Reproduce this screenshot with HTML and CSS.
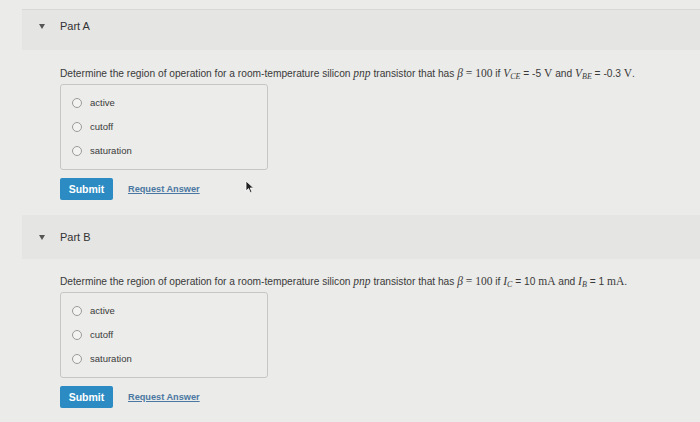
FILE: index.html
```html
<!DOCTYPE html>
<html>
<head>
<meta charset="utf-8">
<link rel="stylesheet" href="styles.css">
</head>
<body>
<div class="page">
  <section class="part part-a">
    <div class="part-head"><span class="caret"></span><span class="part-title">Part A</span></div>
    <div class="part-body">
      <p class="question">Determine the region of operation for a room-temperature silicon <i class="m">pnp</i> transistor that has <span class="m"><i>β</i> = 100</span> if <span class="m"><i>V<sub>CE</sub></i></span> = -5 <span class="m">V</span> and <span class="m"><i>V<sub>BE</sub></i></span> = -0.3 <span class="m">V</span>.</p>
      <div class="choices">
        <label class="choice"><span class="radio"></span>active</label>
        <label class="choice"><span class="radio"></span>cutoff</label>
        <label class="choice"><span class="radio"></span>saturation</label>
      </div>
      <div class="actions">
        <button class="submit">Submit</button>
        <a class="request">Request Answer</a>
      </div>
    </div>
    <svg class="cursor" width="10" height="14" viewBox="0 0 10 14"><path d="M1 1 L1 11 L3.5 8.6 L5.4 12.8 L7 12 L5.2 8 L8.6 8 Z" fill="#222" stroke="#fff" stroke-width="0.8"/></svg>
  </section>
  <section class="part part-b">
    <div class="part-head"><span class="caret"></span><span class="part-title">Part B</span></div>
    <div class="part-body">
      <p class="question">Determine the region of operation for a room-temperature silicon <i class="m">pnp</i> transistor that has <span class="m"><i>β</i> = 100</span> if <span class="m"><i>I<sub>C</sub></i></span> = 10 <span class="m">mA</span> and <span class="m"><i>I<sub>B</sub></i></span> = 1 <span class="m">mA</span>.</p>
      <div class="choices">
        <label class="choice"><span class="radio"></span>active</label>
        <label class="choice"><span class="radio"></span>cutoff</label>
        <label class="choice"><span class="radio"></span>saturation</label>
      </div>
      <div class="actions">
        <button class="submit">Submit</button>
        <a class="request">Request Answer</a>
      </div>
    </div>
  </section>
</div>
</body>
</html>
```
FILE: styles.css
```css
html, body {
  margin: 0;
  padding: 0;
}
body {
  background: #ebebe9;
  font-family: "Liberation Sans", Arial, sans-serif;
  color: #3a3a3a;
  width: 700px;
  height: 422px;
  overflow: hidden;
}
.page {
  padding-top: 9px;
}
.part {
  position: relative;
  margin-left: 22px;
}
.part-a {
  border-top: 1px solid #d8d8d6;
}
.part-b {
  margin-top: 15px;
}
.part-head {
  background: #e5e5e3;
  height: 40px;
  display: flex;
  align-items: flex-start;
  padding-left: 17px;
  padding-top: 10px;
  box-sizing: border-box;
}
.part-b .part-head {
  height: 44px;
  padding-top: 16px;
}
.caret {
  width: 0;
  height: 0;
  border-left: 3.5px solid transparent;
  border-right: 3.5px solid transparent;
  border-top: 5px solid #555;
  margin-top: 4px;
}
.part-title {
  margin-left: 15px;
  font-size: 11px;
  color: #333;
}
.part-body {
  padding-left: 38px;
}
.question {
  margin: 17px 0 0 0;
  font-size: 10.2px;
  line-height: 12px;
  color: #3a3a3a;
  white-space: nowrap;
}
.part-b .question {
  margin-top: 16px;
}
.m {
  font-family: "Liberation Serif", "Times New Roman", serif;
  font-size: 11.5px;
}
.m i, i.m {
  font-style: italic;
}
sub {
  font-size: 8px;
  vertical-align: -2px;
  line-height: 0;
}
.choices {
  margin-top: 4px;
  width: 208px;
  height: 86px;
  border: 1px solid #c6c6c4;
  border-radius: 3px;
  box-sizing: border-box;
  background: #ececea;
  display: flex;
  flex-direction: column;
  padding: 12px 0 0 11px;
  gap: 12px;
}
.choice {
  display: flex;
  align-items: center;
  font-size: 9.5px;
  line-height: 12px;
  color: #3a3a3a;
}
.radio {
  width: 10px;
  height: 10px;
  border: 1px solid #9a9a9a;
  border-radius: 50%;
  background: #f3f3f2;
  box-sizing: border-box;
  margin-right: 8px;
}
.actions {
  display: flex;
  align-items: center;
  margin-top: 8px;
  gap: 15px;
}
.submit {
  width: 53px;
  height: 22px;
  border: 0;
  border-radius: 2px;
  background: #2b8bc2;
  color: #fff;
  font-family: "Liberation Sans", Arial, sans-serif;
  font-weight: bold;
  font-size: 10.5px;
  padding: 0;
}
.request {
  font-size: 9.2px;
  font-weight: bold;
  color: #4a78a2;
  text-decoration: underline;
}
.cursor {
  position: absolute;
  left: 223px;
  top: 170px;
}
```
